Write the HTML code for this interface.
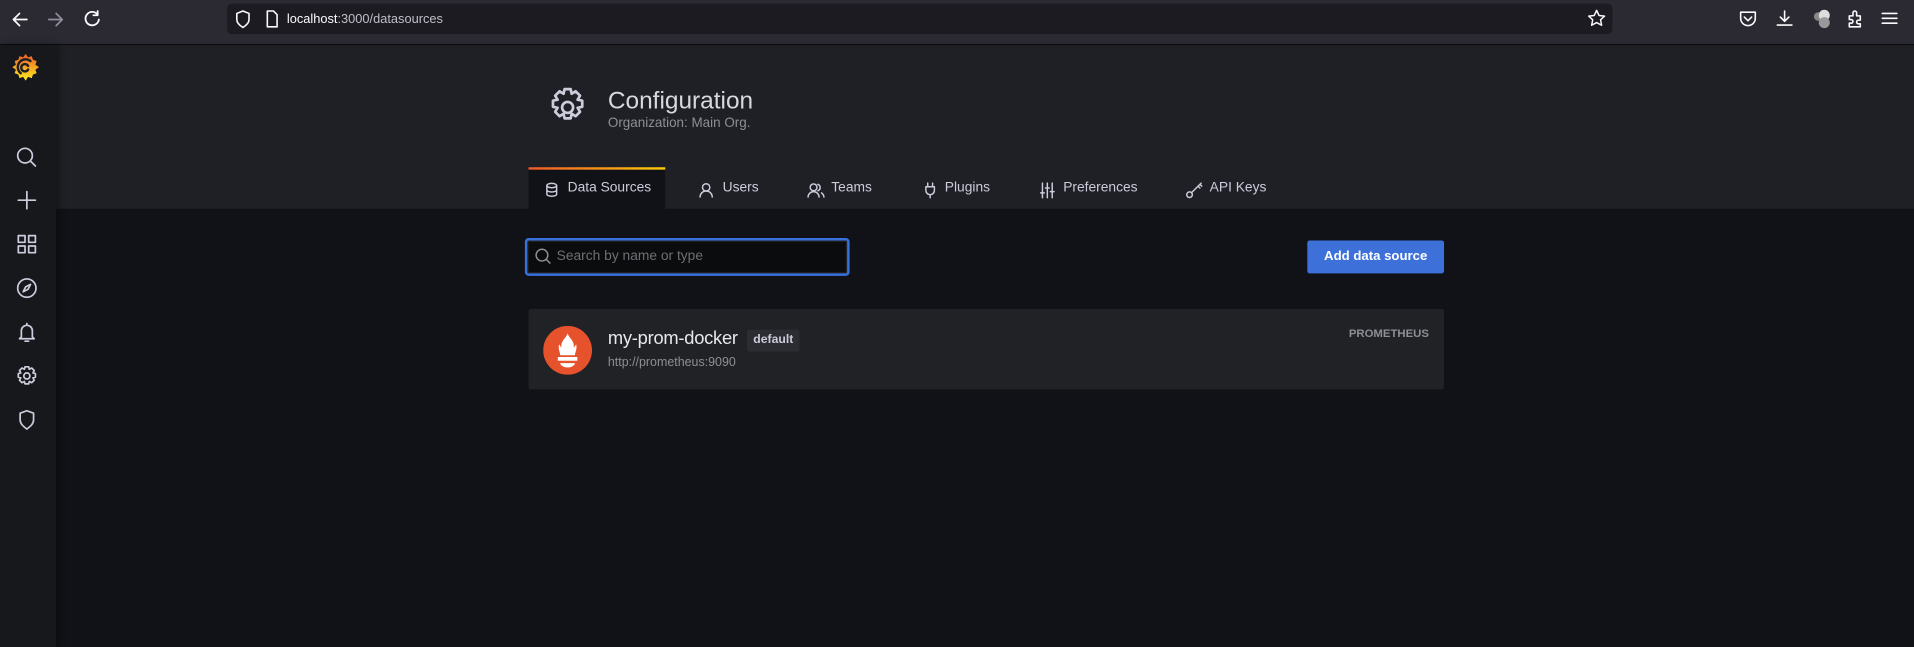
<!DOCTYPE html><html><head><style>
html,body{margin:0;padding:0;background:#111217;overflow:hidden}
#w{width:1568px;height:530px;transform:scale(1.22066);transform-origin:0 0;position:relative;font-family:"Liberation Sans",sans-serif;background:#111217}
.a{position:absolute}
svg{position:absolute;fill:none;stroke-linecap:round;stroke-linejoin:round}
.tab{position:absolute;top:148px;font-size:11.3px;color:#ccccdc}
</style></head><body><div id="w">
<div class="a" style="left:0;top:0;width:1568px;height:36px;background:#2b2a33;border-bottom:1px solid #0c0c0d"></div>
<svg style="left:8px;top:8px" width="18" height="16" stroke="#fbfbfe" stroke-width="1.4"><path d="M14 8H3M8 3L3 8l5 5"/></svg>
<svg style="left:37px;top:8px" width="18" height="16" stroke="#8f8f9d" stroke-width="1.4"><path d="M3 8h11M9 3l5 5-5 5"/></svg>
<svg style="left:67px;top:7px" width="18" height="18" stroke="#fbfbfe" stroke-width="1.5"><path d="M13 5a5.5 5.5 0 1 0 1 4M13 2v3.5H9.5"/></svg>
<div class="a" style="left:186px;top:3px;width:1135px;height:25px;background:#1c1b22;border-radius:4px"></div>
<svg style="left:192px;top:8px" width="14" height="16" stroke="#fbfbfe" stroke-width="1.3"><path d="M7 1L2 3v5c0 3 2.5 5 5 6.5 2.5-1.5 5-3.5 5-6.5V3z"/></svg>
<svg style="left:217px;top:8px" width="12" height="16" stroke="#fbfbfe" stroke-width="1.3"><path d="M2 1h5l3 3v10H2z"/></svg>
<div class="a" style="left:235px;top:10px;font-size:10.5px;color:#fbfbfe">localhost<span style="color:#bfbfc9">:3000/datasources</span></div>
<svg style="left:1300px;top:7px" width="16" height="16" stroke="#fbfbfe" stroke-width="1.2"><path d="M8 1.5l2 4.2 4.5.5-3.3 3 .9 4.5L8 11.5l-4.1 2.2.9-4.5-3.3-3 4.5-.5z"/></svg>
<svg style="left:1424px;top:8px" width="16" height="15" stroke="#fbfbfe" stroke-width="1.3"><path d="M2 2h12v5a6 6 0 0 1-12 0zM5 6l3 3 3-3"/></svg>
<svg style="left:1454px;top:7px" width="16" height="16" stroke="#fbfbfe" stroke-width="1.3"><path d="M8 2v8M4.5 7L8 10.5 11.5 7M2 13.5h12"/></svg>
<div class="a" style="left:1486px;top:10px;width:7px;height:7px;border-radius:50%;background:#888"></div><div class="a" style="left:1490px;top:8px;width:9px;height:9px;border-radius:50%;background:#ddd"></div><div class="a" style="left:1490px;top:14px;width:9px;height:9px;border-radius:50%;background:#999"></div>
<svg style="left:1512px;top:7px" width="16" height="17" stroke="#fbfbfe" stroke-width="1.3"><path d="M3 6h3V3.5a1.5 1.5 0 0 1 3 0V6h3v3.5H10.5a1.5 1.5 0 0 0 0 3H12V15H3v-3h1.5a1.5 1.5 0 0 0 0-3H3z"/></svg>
<svg style="left:1540px;top:8px" width="16" height="14" stroke="#fbfbfe" stroke-width="1.3"><path d="M2 3h12M2 7h12M2 11h12"/></svg>

<div class="a" style="left:0;top:37px;width:1568px;height:134px;background:#1f2025"></div>
<div class="a" style="left:0;top:37px;width:46px;height:493px;background:#17181c;box-shadow:2px 0 6px rgba(0,0,0,.4)"></div>
<svg style="left:8px;top:42px" width="26" height="28" viewBox="0 0 26 28"><defs><linearGradient id="g" x1="0" y1="1" x2="0" y2="0"><stop offset="0" stop-color="#fcee21"/><stop offset="1" stop-color="#f15a24"/></linearGradient></defs><path fill="url(#g)" stroke="none" d="M13 2l2 3 3-1 1 3 3 1-1 3 3 2-3 2 1 3-3 1-1 3-3-1-2 3-2-3-3 1-1-3-3-1 1-3-3-2 3-2-1-3 3-1 1-3 3 1z"/><path stroke="#1f2025" stroke-width="2" d="M15 15a3 3 0 1 1 0-3M9 18a6 6 0 0 1 8-10"/></svg>
<svg style="left:12px;top:119px" width="20" height="20" stroke="#ccccdc" stroke-width="1.4"><circle cx="8.5" cy="8.5" r="6"/><path d="M13 13l4 4"/></svg>
<svg style="left:12px;top:154px" width="20" height="20" stroke="#ccccdc" stroke-width="1.4"><path d="M10 3v14M3 10h14"/></svg>
<svg style="left:12px;top:190px" width="20" height="20" stroke="#ccccdc" stroke-width="1.4"><rect x="3" y="3" width="5.5" height="5.5"/><rect x="11.5" y="3" width="5.5" height="5.5"/><rect x="3" y="11.5" width="5.5" height="5.5"/><rect x="11.5" y="11.5" width="5.5" height="5.5"/></svg>
<svg style="left:12px;top:226px" width="20" height="20" stroke="#ccccdc" stroke-width="1.4"><circle cx="10" cy="10" r="7.5"/><path d="M13 7l-2 4-4 2 2-4z"/></svg>
<svg style="left:12px;top:262px" width="20" height="20" stroke="#ccccdc" stroke-width="1.4"><path d="M5.5 14V9a4.5 4.5 0 0 1 9 0v5l1.5 1.5H4zM8.5 17.5h3M10 3v1.5"/></svg>
<svg style="left:12px;top:298px" width="20" height="20" stroke="#ccccdc" stroke-width="1.4"><circle cx="10" cy="10" r="2.5"/><path d="M8.5 2.5h3l.5 2 2-1 2 2-1 2 2 .5v3l-2 .5 1 2-2 2-2-1-.5 2h-3l-.5-2-2 1-2-2 1-2-2-.5v-3l2-.5-1-2 2-2 2 1z"/></svg>
<svg style="left:12px;top:334px" width="20" height="20" stroke="#ccccdc" stroke-width="1.4"><path d="M10 2.5L4.5 4.5v5.5c0 3.5 3 5.5 5.5 7.5 2.5-2 5.5-4 5.5-7.5V4.5z"/></svg>

<svg style="left:447px;top:70px" width="36" height="36" stroke="#ccccdc" stroke-width="2.2"><circle cx="18" cy="18" r="4.5"/><path d="M15.5 3h5l.8 3.8 3.3-2 3.6 3.6-2 3.3 3.8.8v5l-3.8.8 2 3.3-3.6 3.6-3.3-2-.8 3.8h-5l-.8-3.8-3.3 2-3.6-3.6 2-3.3-3.8-.8v-5l3.8-.8-2-3.3 3.6-3.6 3.3 2z"/></svg>
<div class="a" style="left:498px;top:72px;font-size:20px;color:#d8d9e0">Configuration</div>
<div class="a" style="left:498px;top:95px;font-size:11px;color:#8e8e95">Organization: Main Org.</div>

<div class="a" style="left:433px;top:138px;width:112px;height:33px;background:#111217"></div>
<div class="a" style="left:433px;top:137px;width:112px;height:2px;background:linear-gradient(90deg,#f05a28,#fbca0a)"></div>
<svg style="left:446px;top:149px" width="12" height="13" stroke="#ccccdc" stroke-width="1.2"><ellipse cx="6" cy="3" rx="4" ry="1.8"/><path d="M2 3v7c0 1 1.8 1.8 4 1.8s4-.8 4-1.8V3M2 6.5c0 1 1.8 1.8 4 1.8s4-.8 4-1.8"/></svg>
<div class="tab" style="left:465px">Data Sources</div>
<svg style="left:572px;top:149px" width="13" height="13" stroke="#ccccdc" stroke-width="1.2"><circle cx="6.5" cy="4.5" r="3"/><path d="M1.5 12.5a5 5 0 0 1 10 0"/></svg>
<div class="tab" style="left:592px">Users</div>
<svg style="left:661px;top:149px" width="15" height="13" stroke="#ccccdc" stroke-width="1.2"><circle cx="5.5" cy="4.5" r="2.8"/><path d="M1 12.5a4.5 4.5 0 0 1 9 0M9 2a2.8 2.8 0 0 1 0 5.3M12 9a4.5 4.5 0 0 1 2 3.5"/></svg>
<div class="tab" style="left:681px">Teams</div>
<svg style="left:756px;top:149px" width="12" height="14" stroke="#ccccdc" stroke-width="1.2"><path d="M4 1v3M8 1v3M2.5 4h7v3a3.5 3.5 0 0 1-7 0zM6 10.5V13"/></svg>
<div class="tab" style="left:774px">Plugins</div>
<svg style="left:851px;top:149px" width="14" height="14" stroke="#ccccdc" stroke-width="1.2"><path d="M3 1v12M7 1v12M11 1v12M1.5 9h3M5.5 5h3M9.5 8h3"/></svg>
<div class="tab" style="left:871px">Preferences</div>
<svg style="left:971px;top:149px" width="15" height="14" stroke="#ccccdc" stroke-width="1.2"><circle cx="3.5" cy="10.5" r="2.3"/><path d="M5.2 8.8L13 1M10.5 3.5l1.5 1.5M12 2l1.5 1.5"/></svg>
<div class="tab" style="left:991px">API Keys</div>

<div class="a" style="left:430px;top:195px;width:262px;height:27px;background:#0b0c0e;border:2px solid #3871dc;border-radius:3px;box-shadow:inset 0 0 0 1px #24262b"></div>
<svg style="left:438px;top:203px" width="14" height="14" stroke="#8e8e95" stroke-width="1.2"><circle cx="6" cy="6" r="4.8"/><path d="M9.5 9.5l3 3"/></svg>
<div class="a" style="left:456px;top:204px;font-size:11.3px;color:#6e6f75">Search by name or type</div>
<div class="a" style="left:1071px;top:197px;width:112px;height:27px;background:#3d71d9;border-radius:2px;color:#fff;font-size:10.8px;font-weight:bold;text-align:center;line-height:27px">Add data source</div>

<div class="a" style="left:433px;top:253px;width:750px;height:66px;background:#202226;border-radius:2px"></div>
<svg style="left:445px;top:267px" width="40" height="40" viewBox="0 0 40 40"><circle cx="20" cy="20" r="20" fill="#e6522c" stroke="none"/><path fill="#fff" stroke="none" d="M20 6c1 4 6 6 5 12l2-3c1 4-1 7-1 9H14c0-2-2-5-1-9l2 3c-1-6 4-8 5-12zM12 25.5h16v3H12zM14 30.5h12c0 2-3 3.5-6 3.5s-6-1.5-6-3.5z"/></svg>
<div class="a" style="left:498px;top:269px;font-size:15px;letter-spacing:-0.2px;color:#e8e8ec">my-prom-docker</div>
<div class="a" style="left:612px;top:270px;width:43px;height:18px;background:#2c2d32;border-radius:2px;font-size:10px;color:#ccccdc;text-align:center;line-height:18px;font-weight:bold">default</div>
<div class="a" style="left:498px;top:292px;font-size:10.2px;color:#8e8e95">http://prometheus:9090</div>
<div class="a" style="left:1105px;top:268px;font-size:9.3px;font-weight:bold;color:#8e8e95">PROMETHEUS</div>
</div></body></html>
